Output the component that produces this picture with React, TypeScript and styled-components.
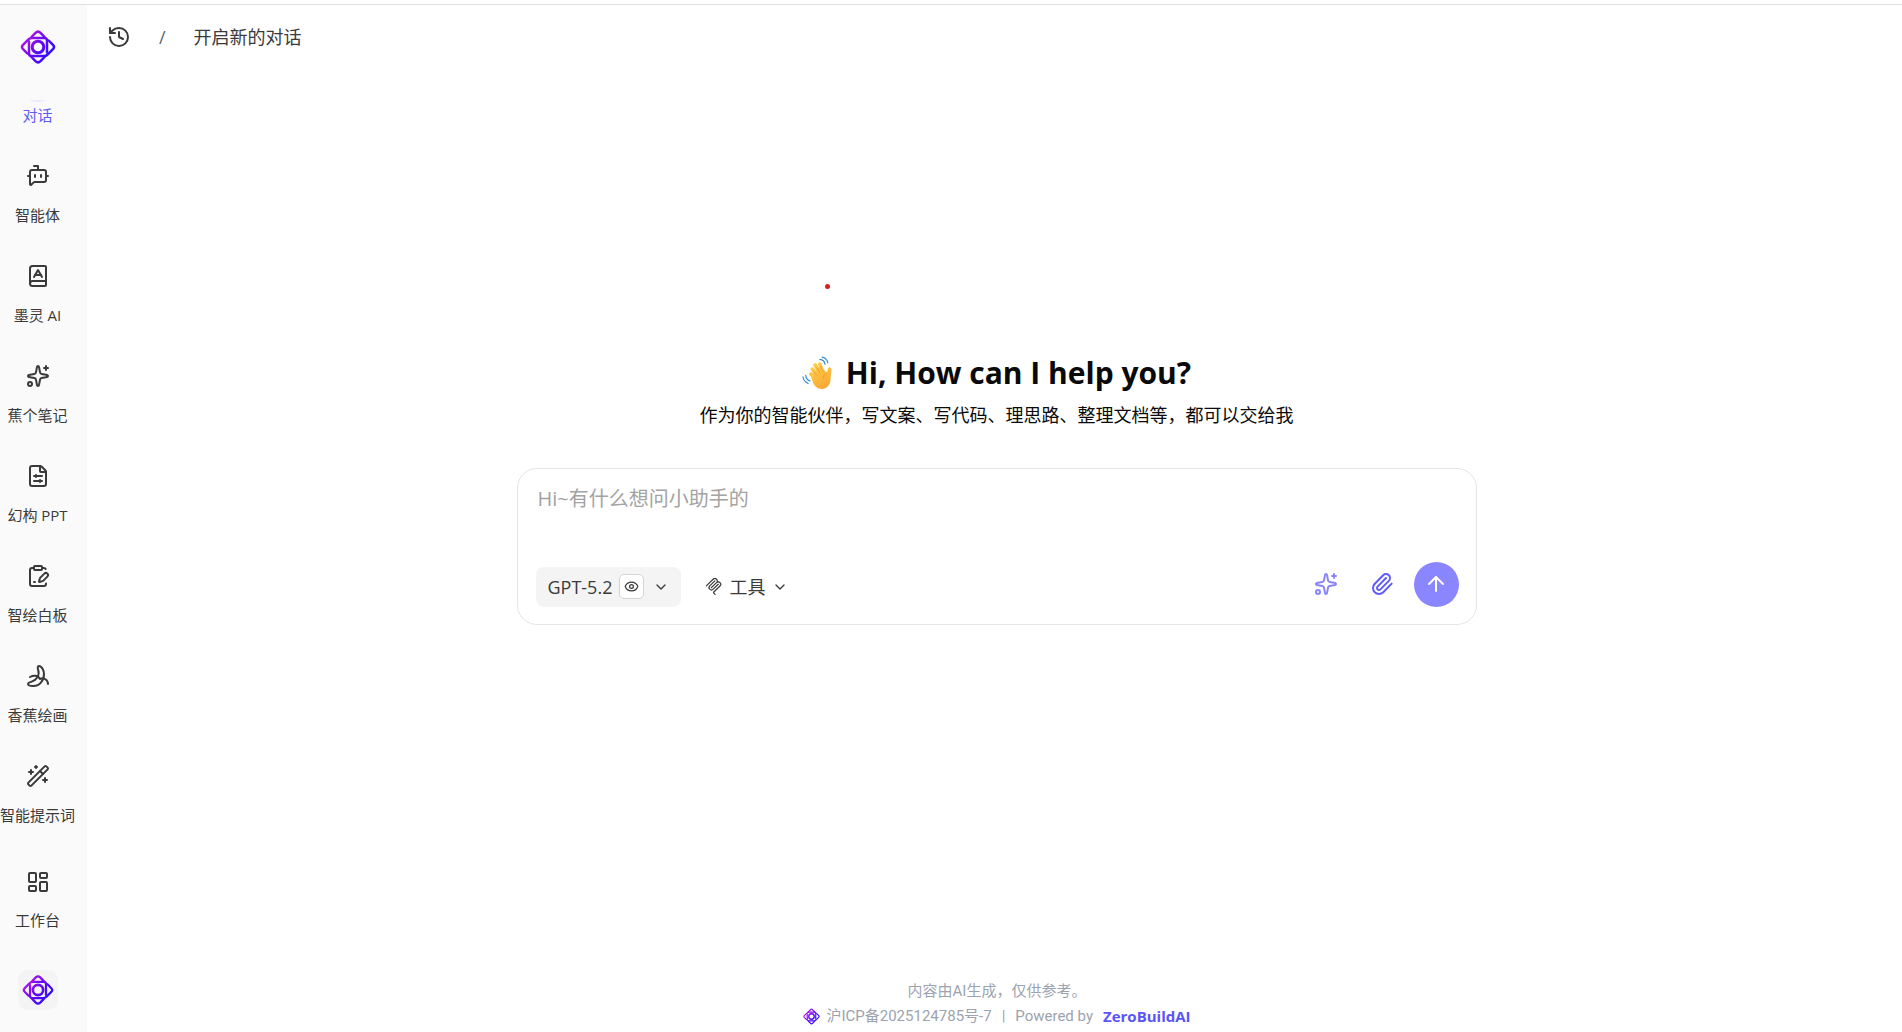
import React from 'react';
import styled, { createGlobalStyle } from 'styled-components';
import {
  ArrowUp, Banana, BookA, BotMessageSquare, ChevronDown, ClipboardPenLine, Eye,
  FileSliders, History, LayoutDashboard, Paperclip, Sparkles, WandSparkles,
} from 'lucide-react';

const GlobalStyle = createGlobalStyle`
  *, *::before, *::after { box-sizing: border-box; }
  body {
    margin: 0;
    background: #ffffff;
    color: #3a3a3a;
    font-family: 'Open Sans', 'Noto Sans CJK SC', sans-serif;
    font-size: 16px;
  }
  button { font: inherit; color: inherit; border: 0; padding: 0; background: none; cursor: pointer; }
  a { color: inherit; text-decoration: none; }
`;

const Shell = styled.div`
  display: flex;
  height: 100vh;
  padding-top: 4px;
`;

const TopRule = styled.div`
  position: absolute;
  top: 4px;
  left: 0;
  right: 0;
  height: 1px;
  background: #e0e0e0;
`;

const Sidebar = styled.aside`
  display: flex;
  flex-direction: column;
  flex: none;
  width: 87px;
  padding: 25px 12px 22px 0;
  background: #fafafa;
  overflow: hidden;
`;

const Brand = styled.a`
  display: flex;
  flex: none;
  justify-content: center;
`;

const NavScroll = styled.nav`
  display: flex;
  flex-direction: column;
  justify-content: flex-end;
  flex: 1;
  min-height: 0;
  margin-top: 35px;
  overflow: hidden;
`;

const NavItem = styled.a<{ $active?: boolean }>`
  display: flex;
  flex: none;
  flex-direction: column;
  align-items: center;
  gap: 15px;
  height: 100px;
  padding-top: 16px;
  color: ${(p) => (p.$active ? '#615cf5' : '#3a3a3a')};
  font-size: 15px;
  line-height: 24px;
  white-space: nowrap;
`;

const NavIcon = styled.span<{ $active?: boolean }>`
  display: grid;
  place-items: center;
  flex: none;
  width: 50px;
  height: 52px;
  margin: -14px 0;
  border-radius: 50%;
  background: ${(p) => (p.$active ? '#ebeaff' : 'transparent')};
`;

const NavLabel = styled.span`
  display: flex;
  justify-content: center;
  width: 75px;
`;

const Avatar = styled.button`
  display: grid;
  place-items: center;
  flex: none;
  align-self: center;
  width: 40px;
  height: 40px;
  border-radius: 10px;
  background: #f4f4f5;
`;

const Main = styled.main`
  display: flex;
  flex-direction: column;
  flex: 1;
  min-width: 0;
`;

const Header = styled.header`
  display: flex;
  align-items: center;
  gap: 28px;
  height: 65px;
  padding-left: 20px;
  font-size: 18px;
  line-height: 28px;
`;

const IconButton = styled.button<{ $tone?: string }>`
  display: grid;
  place-items: center;
  width: 24px;
  height: 24px;
  color: ${(p) => p.$tone ?? '#3a3a3a'};
`;

const Slash = styled.span`
  color: #666666;
`;

const Center = styled.section`
  display: flex;
  flex-direction: column;
  align-items: center;
  justify-content: center;
  flex: 1;
  padding: 0 20px 75px 24px;
`;

const Hero = styled.div`
  display: flex;
  flex-direction: column;
  align-items: center;
  margin-bottom: 39px;
  color: #0a0a0a;
`;

const Title = styled.h1`
  display: flex;
  align-items: center;
  gap: 14px;
  margin: 0;
  font-size: 30px;
  font-weight: 700;
  line-height: 48px;
`;

const Subtitle = styled.p`
  margin: 4px 0 0;
  font-size: 18px;
  line-height: 28px;
`;

const RedDot = styled.span`
  position: absolute;
  top: 284px;
  left: calc(50% - 126px);
  width: 5px;
  height: 5px;
  border-radius: 50%;
  background: #e01b1b;
`;

const Composer = styled.form`
  display: flex;
  flex-direction: column;
  justify-content: space-between;
  width: 100%;
  max-width: 960px;
  height: 157px;
  padding: 16px 17px 17px 18px;
  border: 1px solid #e5e5e5;
  border-radius: 20px;
  background: #ffffff;
`;

const Prompt = styled.textarea`
  width: 100%;
  height: 60px;
  padding: 0 2px;
  border: 0;
  outline: 0;
  resize: none;
  background: transparent;
  color: #3a3a3a;
  font: inherit;
  font-size: 20px;
  line-height: 28px;
  &::placeholder { color: #a3a3a3; opacity: 1; }
`;

const Toolbar = styled.div`
  display: flex;
  align-items: flex-end;
  justify-content: space-between;
`;

const ToolGroup = styled.div<{ $gap: number }>`
  display: flex;
  align-items: center;
  gap: ${(p) => p.$gap}px;
`;

const PickerButton = styled.button<{ $filled?: boolean }>`
  display: flex;
  align-items: center;
  gap: 7px;
  height: 40px;
  padding: 0 12px;
  border-radius: 8px;
  background: ${(p) => (p.$filled ? '#f4f4f4' : 'transparent')};
  font-size: 18px;
  line-height: 28px;
`;

const EyeBadge = styled.span`
  display: grid;
  place-items: center;
  width: 25px;
  height: 25px;
  margin-right: 2px;
  border: 1px solid #d4d4d4;
  border-radius: 5px;
  background: #ffffff;
`;

const SendButton = styled.button`
  display: grid;
  place-items: center;
  width: 45px;
  height: 45px;
  border-radius: 50%;
  background: #8a86ff;
  color: #ffffff;
`;

const Footer = styled.footer`
  display: flex;
  flex-direction: column;
  align-items: center;
  padding: 0 0 3px 5px;
  color: #9ca3af;
  font-family: Roboto, 'Noto Sans CJK SC', sans-serif;
  font-size: 15px;
  line-height: 25px;
`;

const FooterRow = styled.div`
  display: flex;
  align-items: center;
  gap: 10px;
`;

const FooterLink = styled.a`
  display: flex;
  align-items: center;
  gap: 6px;
`;

const Powered = styled.a`
  color: #5b54f7;
  font-family: 'Open Sans', sans-serif;
  font-weight: 700;
`;

function Logo({ size, id }: { size: number; id: string }) {
  return (
    <svg width={size} height={size} viewBox="0 0 36 36" fill="none" aria-hidden="true">
      <defs>
        <linearGradient id={id} x1="4" y1="8" x2="30" y2="28" gradientUnits="userSpaceOnUse">
          <stop offset="0" stopColor="#b517e8" />
          <stop offset="0.5" stopColor="#6a0af0" />
          <stop offset="1" stopColor="#2a0cff" />
        </linearGradient>
      </defs>
      <g stroke={`url(#${id})`} strokeWidth="2.5" strokeLinejoin="round" strokeLinecap="round">
        <path d="M11.5 8 15.5 3.800q2.500-2.400 5 0L24.500 8" />
        <path d="M11.500 28 15.500 32.200q2.500 2.400 5 0L24.500 28" />
        <path d="M27 23.500V11.500q0-2.600-2.600-2.600H12.200q-2.400 0-4 1.800L2.800 16.200q-1.600 1.800 0 3.600l4.500 4.700" />
        <path d="M9 12.500v12q0 2.600 2.600 2.600h12.200q2.400 0 4-1.800l5.400-5.500q1.600-1.800 0-3.600l-4.500-4.700" />
        <circle cx="18" cy="18" r="5.8" strokeWidth="3" />
      </g>
    </svg>
  );
}

function McpIcon() {
  return (
    <svg width="17" height="17" viewBox="0 0 24 24" fill="currentColor" aria-hidden="true">
      <path d="M15.688 2.343a2.588 2.588 0 00-3.61 0l-9.626 9.44a.863.863 0 01-1.203 0 .823.823 0 010-1.18l9.626-9.44a4.313 4.313 0 016.016 0 4.116 4.116 0 011.204 3.54 4.3 4.3 0 013.609 1.18l.05.05a4.115 4.115 0 010 5.9l-8.706 8.537a.274.274 0 000 .393l1.788 1.754a.823.823 0 010 1.18.863.863 0 01-1.203 0l-1.788-1.753a1.92 1.92 0 010-2.754l8.706-8.538a2.47 2.47 0 000-3.54l-.05-.049a2.588 2.588 0 00-3.607-.003l-7.172 7.034-.002.002-.098.097a.863.863 0 01-1.204 0 .823.823 0 010-1.18l7.273-7.133a2.47 2.47 0 00-.003-3.537z" />
      <path d="M14.485 4.703a.823.823 0 000-1.18.863.863 0 00-1.204 0l-7.119 6.982a4.115 4.115 0 000 5.9 4.314 4.314 0 006.016 0l7.12-6.982a.823.823 0 000-1.18.863.863 0 00-1.204 0l-7.119 6.982a2.588 2.588 0 01-3.61 0 2.47 2.47 0 010-3.54l7.12-6.982z" />
    </svg>
  );
}

function WavingHand() {
  return (
    <svg width="30" height="34" viewBox="0 0 32 36" fill="none" aria-hidden="true">
      <defs>
        <linearGradient id="hand" x1="12" y1="8" x2="26" y2="34" gradientUnits="userSpaceOnUse">
          <stop offset="0" stopColor="#ffcf4a" />
          <stop offset="1" stopColor="#f9a733" />
        </linearGradient>
      </defs>
      <g stroke="url(#hand)" strokeLinecap="round" strokeWidth="4">
        <path d="M17 21 11 14" />
        <path d="M19 18 14 9.5" />
        <path d="M22 17 19 8.5" />
        <path d="M17 25 9.500 19" />
        <path d="M28.500 22 29.500 14" />
      </g>
      <path d="M9 20 21 11l4.500 6 4.500-2 .5 9c.3 6-4 11-9.500 11-4.500 0-7-2.500-9-6z" fill="url(#hand)" />
      <path d="M12.500 16.500 16 20.500M16 12.500 19.500 18M20 11.500 22.500 16.500M25.500 18.500c-2 1.200-2.800 3-2.200 5" stroke="#e8932a" strokeWidth="0.8" strokeLinecap="round" />
      <g stroke="#3b8fd0" strokeWidth="1.300" strokeLinecap="round">
        <path d="M19 3.500c3 .3 5 2 5.500 5" />
        <path d="M21.500 1c3.500.8 5.500 3 6 6" />
        <path d="M4 20.500c.2 3 1.800 5 4.500 6" />
        <path d="M1 22c.5 3.500 2.500 5.800 5.500 7" />
      </g>
    </svg>
  );
}

const navItems = [
  { label: '智能体', Icon: BotMessageSquare },
  { label: '墨灵 AI', Icon: BookA },
  { label: '蕉个笔记', Icon: Sparkles },
  { label: '幻构 PPT', Icon: FileSliders },
  { label: '智绘白板', Icon: ClipboardPenLine },
  { label: '香蕉绘画', Icon: Banana },
  { label: '智能提示词', Icon: WandSparkles },
];

const Workbench = styled(NavItem)`
  height: 116px;
  margin-top: 6px;
  gap: 14px;
`;

export default function App() {
  return (
    <>
      <GlobalStyle />
      <TopRule />
      <Shell>
        <Sidebar>
          <Brand href="#" aria-label="ZeroBuildAI"><Logo size={36} id="brand" /></Brand>
          <NavScroll>
            <NavItem href="#" $active>
              <NavIcon $active />
              <NavLabel>对话</NavLabel>
            </NavItem>
            {navItems.map(({ label, Icon }) => (
              <NavItem href="#" key={label}>
                <NavIcon><Icon size={24} /></NavIcon>
                <NavLabel>{label}</NavLabel>
              </NavItem>
            ))}
          </NavScroll>
          <Workbench href="#">
            <NavIcon><LayoutDashboard size={24} /></NavIcon>
            <NavLabel>工作台</NavLabel>
          </Workbench>
          <Avatar aria-label="账户"><Logo size={32} id="avatar" /></Avatar>
        </Sidebar>
        <Main>
          <Header>
            <IconButton aria-label="历史记录"><History size={24} /></IconButton>
            <Slash>/</Slash>
            <span>开启新的对话</span>
          </Header>
          <Center>
            <Hero>
              <Title><WavingHand />Hi, How can I help you?</Title>
              <Subtitle>作为你的智能伙伴，写文案、写代码、理思路、整理文档等，都可以交给我</Subtitle>
            </Hero>
            <Composer onSubmit={(e) => e.preventDefault()}>
              <Prompt aria-label="消息" placeholder="Hi~有什么想问小助手的" />
              <Toolbar>
                <ToolGroup $gap={12}>
                  <PickerButton type="button" $filled>
                    GPT-5.2
                    <EyeBadge><Eye size={15} /></EyeBadge>
                    <ChevronDown size={16} />
                  </PickerButton>
                  <PickerButton type="button">
                    <McpIcon />
                    工具
                    <ChevronDown size={16} />
                  </PickerButton>
                </ToolGroup>
                <ToolGroup $gap={20}>
                  <ToolGroup $gap={32}>
                    <IconButton type="button" aria-label="优化提示词" $tone="#8a86fa"><Sparkles size={24} /></IconButton>
                    <IconButton type="button" aria-label="附件" $tone="#615cf5"><Paperclip size={24} /></IconButton>
                  </ToolGroup>
                  <SendButton aria-label="发送"><ArrowUp size={24} /></SendButton>
                </ToolGroup>
              </Toolbar>
            </Composer>
          </Center>
          <Footer>
            <span>内容由AI生成，仅供参考。</span>
            <FooterRow>
              <FooterLink href="#"><Logo size={17} id="icp" />沪ICP备2025124785号-7</FooterLink>
              <span>|</span>
              <span>Powered by</span>
              <Powered href="#">ZeroBuildAI</Powered>
            </FooterRow>
          </Footer>
        </Main>
      </Shell>
      <RedDot />
    </>
  );
}
